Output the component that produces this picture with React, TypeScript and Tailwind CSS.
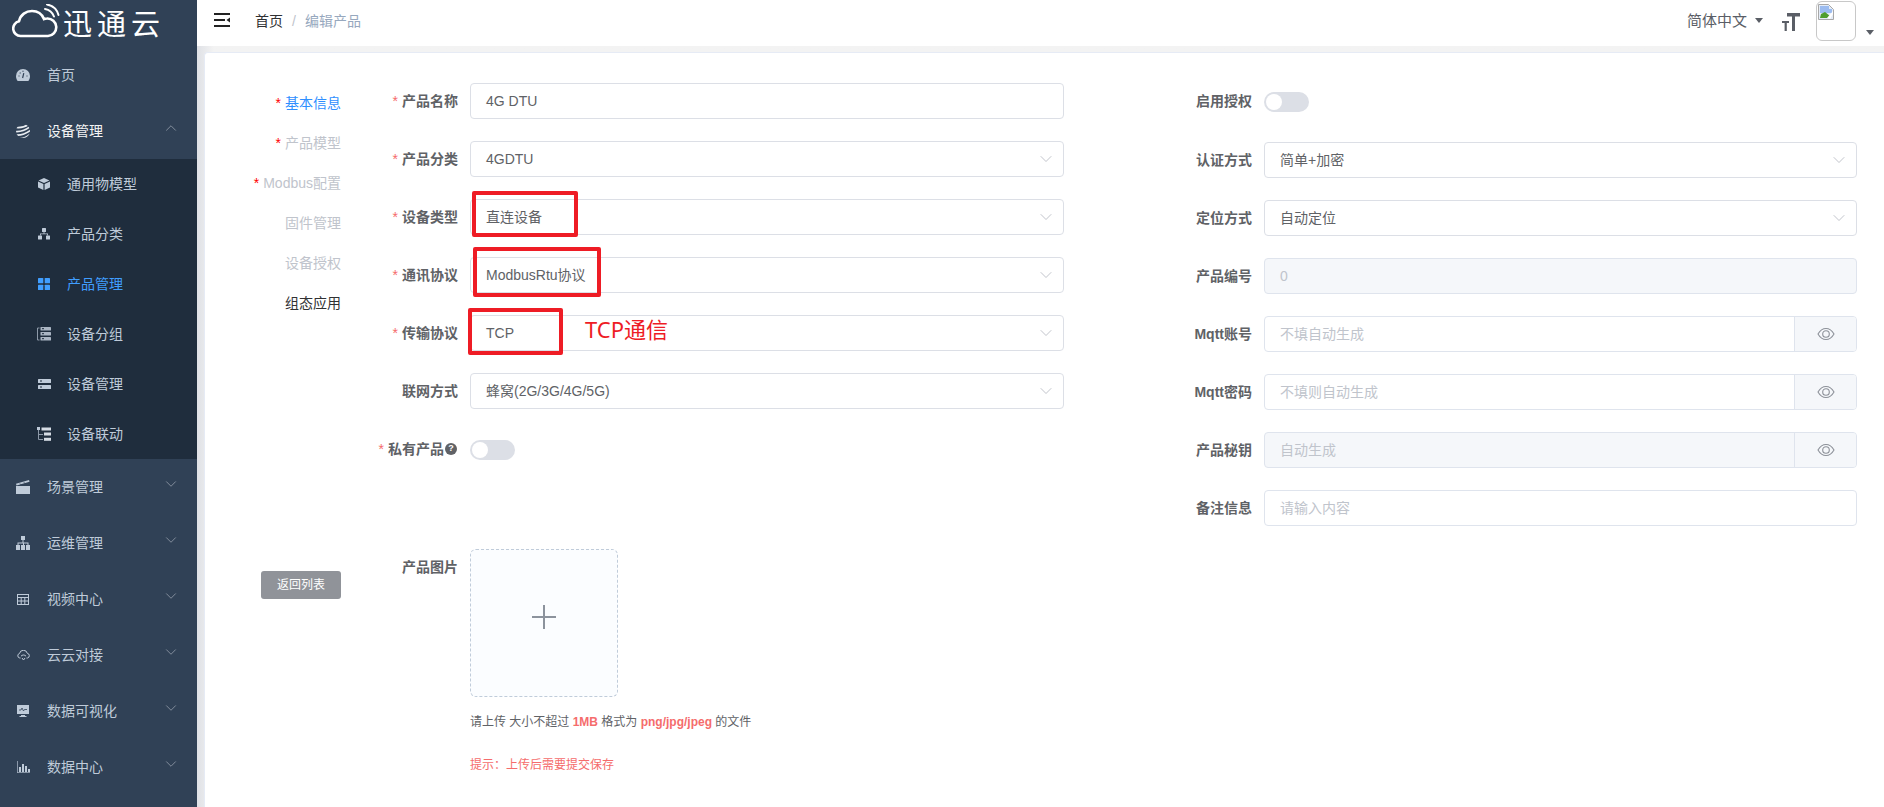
import React from "react";
import { ChevronDown, ChevronUp } from "lucide-react";

const Dash = () => (
  <svg width="14" height="12" viewBox="0 0 14 12" fill="currentColor">
    <path d="M7 0a7 7 0 0 1 7 7c0 2-.7 3.600-1.600 5H1.600C.7 10.600 0 9 0 7a7 7 0 0 1 7-7z" />
    <path d="M7.800 4.200 6.600 9M2.500 7h1M10.500 7h1M3.800 3.600l.7.700M7 1.800v1" stroke="#304156" strokeWidth="1.200" fill="none" />
  </svg>
);
const Globe = () => (
  <svg width="14" height="14" viewBox="0 0 14 14">
    <defs>
      <clipPath id="gc"><circle cx="7" cy="7" r="7" /></clipPath>
    </defs>
    <g clipPath="url(#gc)" stroke="#e8ecf1" strokeWidth="1.700" fill="none">
      <path d="M0 3.500C4 4 9 3 13 0M-1 7.500C4 8 10 6 15 2M0 11c5 .5 10-1.500 15-5M3 14.500c4 .5 8-1.500 11-4" />
    </g>
  </svg>
);
const Cube = () => (
  <svg width="12" height="12" viewBox="0 0 12 12" fill="#bfcbd9">
    <path d="M6 0l5.500 2.500L6 5 .5 2.500z" />
    <path d="M0 3.500l5.400 2.400V12L0 9.500zM12 3.500L6.600 5.900V12L12 9.500z" />
  </svg>
);
const Tree = () => (
  <svg width="12" height="12" viewBox="0 0 12 12" fill="#bfcbd9">
    <rect x="4" y="0" width="4" height="4" rx=".5" />
    <rect x="0" y="7.500" width="4" height="4" rx=".5" />
    <rect x="8" y="7.500" width="4" height="4" rx=".5" />
    <path d="M2 7.500V5.500h8v2h-.8V6.300H2.800v1.200zM5.600 4h.8v2h-.8z" />
  </svg>
);
const Grid4 = () => (
  <svg width="12" height="12" viewBox="0 0 12 12" fill="#409eff">
    <rect width="5.300" height="5.300" rx=".6" />
    <rect x="6.700" width="5.300" height="5.300" rx=".6" />
    <rect y="6.700" width="5.300" height="5.300" rx=".6" />
    <rect x="6.700" y="6.700" width="5.300" height="5.300" rx=".6" />
  </svg>
);
const Group = () => (
  <svg width="14" height="14" viewBox="0 0 14 14">
    <path d="M2.500 1H.5v12h2" stroke="#8d99a8" fill="none" />
    <rect x="3.500" y="0" width="10.500" height="3.500" rx=".6" fill="#aab5c3" />
    <rect x="3.500" y="5" width="10.500" height="3.500" rx=".6" fill="#aab5c3" />
    <rect x="3.500" y="10" width="10.500" height="3.500" rx=".6" fill="#aab5c3" />
    <path d="M5 1.700h2M5 6.700h2M5 11.700h2" stroke="#1f2d3d" />
  </svg>
);
const Server = () => (
  <svg width="13" height="10" viewBox="0 0 13 10" fill="#bfcbd9">
    <rect width="13" height="4" rx=".5" />
    <rect y="6" width="13" height="4" rx=".5" />
    <path d="M2 1.500h2v1H2zM2 7.500h2v1H2z" fill="#1f2d3d" />
  </svg>
);
const Flow = () => (
  <svg width="14" height="14" viewBox="0 0 14 14">
    <rect x="0" y="0" width="3" height="3" fill="#bfcbd9" />
    <path d="M1.500 3v9.500H6M1.500 7.500H6" stroke="#8d99a8" fill="none" />
    <rect x="4.500" y=".5" width="9.500" height="3" fill="#d5dce4" />
    <rect x="7" y="5.500" width="7" height="3" fill="#d5dce4" />
    <rect x="7" y="10.800" width="7" height="3" fill="#d5dce4" />
  </svg>
);
const Clap = () => (
  <svg width="14" height="14" viewBox="0 0 14 14" fill="#bfcbd9">
    <path d="M0 6h14v8H0z" />
    <path d="M0 3.800 13 0l.5 1.700-13 3.700z" />
    <path d="M4 3.600l1.200 1.200M8 2.400l1.200 1.200" stroke="#304156" />
  </svg>
);
const Org = () => (
  <svg width="14" height="14" viewBox="0 0 14 14" fill="#bfcbd9">
    <rect x="5" y="0" width="4" height="4" />
    <rect x="0" y="9" width="4" height="5" />
    <rect x="5" y="9" width="4" height="5" />
    <rect x="10" y="9" width="4" height="5" />
    <path d="M6.500 4h1v2.500h5V9h-1V7.500h-3.500V9h-1V7.500H2.500V9h-1V6.500h5z" />
  </svg>
);
const Table = () => (
  <svg width="12" height="11" viewBox="0 0 12 11" fill="none" stroke="#bfcbd9">
    <rect x=".5" y=".5" width="11" height="10" />
    <path d="M.5 3.500h11M.5 7h11M4.200 3.500v7M7.800 3.500v7" />
  </svg>
);
const CloudLink = () => (
  <svg width="13" height="11" viewBox="0 0 13 11" fill="none" stroke="#bfcbd9" strokeWidth="1">
    <path d="M3.500 8H2.800a2.300 2.300 0 0 1-.3-4.500 4 4 0 0 1 7.800-.2 2.400 2.400 0 0 1 .2 4.700H9.500" />
    <path d="M4 6.200a3.200 3.200 0 0 1 5 0M5 8l1.500 2L8 8" />
  </svg>
);
const Monitor = () => (
  <svg width="12" height="12" viewBox="0 0 12 12" fill="#bfcbd9">
    <path d="M0 0h12v9H0zM4 10h4v1h1.500v1h-7v-1H4z" />
    <path d="M2 5h2l1-2 1.500 3 1-1.500H10" stroke="#304156" strokeWidth=".8" fill="none" />
  </svg>
);
const Bars = () => (
  <svg width="13" height="12" viewBox="0 0 13 12" fill="#bfcbd9">
    <path d="M0 0h.8v11.200H13v.8H0z" opacity=".8" />
    <rect x="2" y="6" width="2" height="5" />
    <rect x="5" y="3" width="2" height="8" />
    <rect x="8" y="5" width="2" height="6" />
    <rect x="11" y="8" width="2" height="3" />
  </svg>
);

const Eye = () => (
  <svg width="18" height="16" viewBox="0 0 18 16" fill="none" stroke="#8d9199" strokeWidth="1.100">
    <path d="M1 8c2-3.500 4.800-5.500 8-5.500S15 4.500 17 8c-2 3.500-4.800 5.500-8 5.500S3 11.500 1 8z" />
    <circle cx="9" cy="8" r="3.300" />
  </svg>
);

const subMenu = [
  { icon: <Cube />, label: "通用物模型" },
  { icon: <Tree />, label: "产品分类" },
  { icon: <Grid4 />, label: "产品管理", active: true },
  { icon: <Group />, label: "设备分组" },
  { icon: <Server />, label: "设备管理" },
  { icon: <Flow />, label: "设备联动" },
];

const bottomMenu = [
  { icon: <Clap />, label: "场景管理" },
  { icon: <Org />, label: "运维管理" },
  { icon: <Table />, label: "视频中心" },
  { icon: <CloudLink />, label: "云云对接" },
  { icon: <Monitor />, label: "数据可视化" },
  { icon: <Bars />, label: "数据中心" },
];

const Sidebar = () => (
  <aside className="w-[197px] shrink-0 bg-[#304156] text-[14px] text-[#bfcbd9]">
    <div className="flex h-[47px] items-start pl-[12px] pt-[4px]">
      <svg width="48" height="34" viewBox="0 0 48 34" fill="none" stroke="#fff" strokeWidth="2.600" strokeLinecap="round">
        <path d="M11 32H8.500a7.500 7.500 0 0 1-1.500-14.800C8.500 10.500 14 7 20 7c5.500 0 10 3 12 8 1-.4 2-.5 3-.5a8.700 8.700 0 0 1 1 17.500z" />
        <path d="M33 5c4 .7 7.500 3.500 9 7.500M35 .5c5.500 1 10 5 11.500 10.500" strokeWidth="2" />
      </svg>
      <span className="ml-[3px] mt-[3px] text-[29px] leading-[36px] tracking-[5px] text-white">迅通云</span>
    </div>
    <div className="flex h-[56px] items-center">
      <span className="flex w-[47px] justify-center pr-[1px]"><Dash /></span>
      <span>首页</span>
    </div>
    <div className="relative flex h-[56px] items-center text-[#f4f4f5]">
      <span className="flex w-[47px] justify-center pr-[1px]"><Globe /></span>
      <span>设备管理</span>
      <ChevronUp size={18} strokeWidth={1.2} className="ml-auto mb-[6px] mr-[17px] text-[#8a94a3]" />
    </div>
    <div className="bg-[#1f2d3d]">
      {subMenu.map((item) => (
        <div key={item.label} className={`flex h-[50px] items-center ${item.active ? "text-[#409eff]" : ""}`}>
          <span className="ml-[37px] flex w-[14px] justify-center">{item.icon}</span>
          <span className="ml-[16px]">{item.label}</span>
        </div>
      ))}
    </div>
    {bottomMenu.map((item) => (
      <div key={item.label} className="flex h-[56px] items-center">
        <span className="flex w-[47px] justify-center pr-[1px]">{item.icon}</span>
        <span>{item.label}</span>
        <ChevronDown size={18} strokeWidth={1.2} className="ml-auto mb-[6px] mr-[17px] text-[#8a94a3]" />
      </div>
    ))}
  </aside>
);

const Navbar = () => (
  <header className="flex h-[46px] shrink-0 items-start bg-white">
    <svg className="ml-[17px] mt-[13px]" width="16" height="14" viewBox="0 0 16 14" fill="#222">
      <rect width="16" height="2" />
      <rect y="6" width="11" height="2" />
      <rect y="12" width="16" height="2" />
      <path d="M16 4.500v5L12.500 7z" />
    </svg>
    <div className="ml-[25px] mt-[11px] flex text-[14px] leading-[20px]">
      <span className="text-[#303133]">首页</span>
      <span className="mx-[9px] text-[#c0c4cc]">/</span>
      <span className="text-[#97a8be]">编辑产品</span>
    </div>
    <div className="ml-auto flex items-start pr-[10px]">
      <span className="mt-[11px] text-[15px] leading-[20px] text-[#5a5e66]">简体中文</span>
      <span className="ml-[8px] mt-[18px] h-0 w-0 border-x-[4.500px] border-t-[5px] border-x-transparent border-t-[#5a5e66]" />
      <svg className="ml-[19px] mt-[13px]" width="18" height="18" viewBox="0 0 18 18" fill="#5a5e66">
        <path d="M5 0h13v3.500h-5V18H10V3.500H5zM0 8h7v2H4.800v8H2.600v-8H0z" />
      </svg>
      <div className="ml-[16px] mt-[1px] h-[40px] w-[40px] rounded-[6px] border border-[#c8c8c8]">
        <svg className="ml-[1px] mt-[2px]" width="16" height="16" viewBox="0 0 16 16">
          <path d="M.5.500h10l5 5v10H.5z" fill="#e4ecf8" stroke="#a8a8a8" />
          <path d="M2 2h9v3h3v4H2z" fill="#9cbcf0" />
          <path d="M2 14l1-4 4-2 5 4-2 2z" fill="#4f9e2e" />
          <path d="M9 14l6-7v3l-3 5z" fill="#fff" />
        </svg>
      </div>
      <span className="ml-[10px] mt-[30px] h-0 w-0 border-x-[4px] border-t-[5px] border-x-transparent border-t-[#5a5e66]" />
    </div>
  </header>
);

const Stub = ({ children }: { children: string }) => (
  <span className="mr-[4px] font-normal text-[#f56c6c]">{children}</span>
);

const Label = ({ text, required }: { text: string; required?: boolean }) => (
  <div className="w-[117px] shrink-0 text-right text-[14px] font-bold leading-[36px] text-[#606266]">
    {required && <Stub>*</Stub>}
    {text}
  </div>
);

const Select = ({ value, wide }: { value: string; wide?: boolean }) => (
  <div className={`flex h-[36px] items-center rounded-[4px] border border-[#dcdfe6] bg-white pl-[15px] pr-[7px] text-[14px] text-[#606266] ${wide ? "w-[593px]" : "w-[594px]"}`}>
    <span>{value}</span>
    <ChevronDown size={20} strokeWidth={1} className="ml-auto text-[#b4b8c0]" />
  </div>
);

const Row = ({ text, required, children }: { text: string; required?: boolean; children: React.ReactNode }) => (
  <div className="mb-[22px] flex h-[36px] gap-[12px]">
    <Label text={text} required={required} />
    {children}
  </div>
);

const RightRow = ({ text, children }: { text: string; children: React.ReactNode }) => (
  <div className="mb-[22px] flex h-[36px] gap-[12px]">
    <div className="w-[100px] shrink-0 text-right text-[14px] font-bold leading-[36px] text-[#606266]">{text}</div>
    {children}
  </div>
);

const Switch = ({ top }: { top: string }) => (
  <div className={`h-[20px] w-[45px] rounded-full bg-[#dcdfe6] p-[2px] ${top}`}>
    <div className="h-[16px] w-[16px] rounded-full bg-white" />
  </div>
);

const Field = ({ placeholder, disabled }: { placeholder: string; disabled?: boolean }) => (
  <div className={`flex h-[36px] w-[593px] items-center rounded-[4px] border border-[#dfe4ed] pl-[15px] text-[14px] text-[#c0c4cc] ${disabled ? "bg-[#f5f7fa]" : "bg-white"}`}>
    {placeholder}
  </div>
);

const EyeField = ({ placeholder, disabled }: { placeholder: string; disabled?: boolean }) => (
  <div className={`flex h-[36px] w-[593px] overflow-hidden rounded-[4px] border border-[#dfe4ed] text-[14px] text-[#c0c4cc] ${disabled ? "bg-[#f5f7fa]" : "bg-white"}`}>
    <div className="flex flex-1 items-center pl-[15px]">{placeholder}</div>
    <div className="flex w-[62px] items-center justify-center border-l border-[#dfe4ed] bg-[#f5f7fa]">
      <Eye />
    </div>
  </div>
);

const tabs = [
  { label: "基本信息", star: true, color: "text-[#2f8fff]" },
  { label: "产品模型", star: true, color: "text-[#c0c4cc]" },
  { label: "Modbus配置", star: true, color: "text-[#c0c4cc]" },
  { label: "固件管理", color: "text-[#c0c4cc]" },
  { label: "设备授权", color: "text-[#c0c4cc]" },
  { label: "组态应用", color: "text-[#303133]" },
];

const App = () => {
  return (
    <div className="relative flex h-[807px] w-[1884px] overflow-hidden bg-white [font-family:'Liberation_Sans','Noto_Sans_CJK_SC',sans-serif]">
      <Sidebar />
      <div className="flex flex-1 flex-col">
        <Navbar />
        <div className="flex-1 bg-gradient-to-r from-[#dfe1e6] from-0% to-[#f3f3f3] to-[1%] pl-[7px] pt-[6px]">
          <div className="flex h-full rounded-tl-[4px] border-l border-t border-[#e6ebf5] bg-white">
            {/* left tabs */}
            <div className="w-[136px] shrink-0 pt-[30px] text-right text-[14px]">
              {tabs.map((t) => (
                <div key={t.label} className={`h-[40px] leading-[40px] ${t.color}`}>
                  {t.star && <span className="mr-[4px] text-[#f00]">*</span>}
                  {t.label}
                </div>
              ))}
              <button className="ml-[56px] mt-[248px] h-[28px] w-[80px] rounded-[3px] bg-[#909399] text-[12px] text-white">返回列表</button>
            </div>

            {/* left form column */}
            <div className="w-[723px] shrink-0 pt-[30px]">
              <Row text="产品名称" required>
                <div className="flex h-[36px] w-[594px] items-center rounded-[4px] border border-[#dcdfe6] pl-[15px] text-[14px] text-[#606266]">4G DTU</div>
              </Row>
              <Row text="产品分类" required><Select value="4GDTU" /></Row>
              <Row text="设备类型" required><Select value="直连设备" /></Row>
              <Row text="通讯协议" required><Select value="ModbusRtu协议" /></Row>
              <Row text="传输协议" required><Select value="TCP" /></Row>
              <Row text="联网方式"><Select value="蜂窝(2G/3G/4G/5G)" /></Row>
              <div className="flex h-[36px] gap-[13px]">
                <div className="flex w-[116px] shrink-0 items-center justify-end text-[14px] font-bold text-[#606266]">
                  <Stub>*</Stub>
                  私有产品
                  <span className="ml-[1px] flex h-[12px] w-[12px] items-center justify-center rounded-full bg-[#606266] text-[9px] text-white">?</span>
                </div>
                <Switch top="mt-[9px]" />
              </div>
              <div className="mt-[82px] flex gap-[12px]">
                <div className="w-[117px] shrink-0 text-right text-[14px] font-bold leading-[36px] text-[#606266]">产品图片</div>
                <div>
                  <div className="flex h-[148px] w-[148px] items-center justify-center rounded-[6px] border border-dashed border-[#c0ccda] bg-[#fbfdff] pb-[12px]">
                    <svg width="24" height="24" viewBox="0 0 24 24" stroke="#8c939d" strokeWidth="2">
                      <path d="M12 0v24M0 12h24" />
                    </svg>
                  </div>
                  <p className="mt-[17px] text-[12px] leading-[17px] text-[#606266]">
                    请上传 大小不超过 <b className="text-[#f56c6c]">1MB</b> 格式为 <b className="text-[#f56c6c]">png/jpg/jpeg</b> 的文件
                  </p>
                  <p className="mt-[26px] text-[12px] leading-[17px] text-[#f56c6c]">提示：上传后需要提交保存</p>
                </div>
              </div>
            </div>

            {/* right form column */}
            <div className="ml-[88px] pt-[30px]">
              <RightRow text="启用授权"><Switch top="mt-[9px]" /></RightRow>
              <div className="h-[1px]" />
              <RightRow text="认证方式"><Select value="简单+加密" wide /></RightRow>
              <RightRow text="定位方式"><Select value="自动定位" wide /></RightRow>
              <RightRow text="产品编号"><Field placeholder="0" disabled /></RightRow>
              <RightRow text="Mqtt账号"><EyeField placeholder="不填自动生成" /></RightRow>
              <RightRow text="Mqtt密码"><EyeField placeholder="不填则自动生成" /></RightRow>
              <RightRow text="产品秘钥"><EyeField placeholder="自动生成" disabled /></RightRow>
              <RightRow text="备注信息"><Field placeholder="请输入内容" /></RightRow>
            </div>
          </div>
        </div>
      </div>

      {/* red annotations drawn over the form */}
      <div className="absolute left-[472px] top-[191px] h-[46px] w-[106px] rounded-[2px] border-[4px] border-[#ee1c25]" />
      <div className="absolute left-[473px] top-[247px] h-[50px] w-[128px] rounded-[2px] border-[4px] border-[#ee1c25]" />
      <div className="absolute left-[468px] top-[308px] h-[47px] w-[95px] rounded-[2px] border-[4px] border-[#ee1c25]" />
      <div className="absolute left-[585px] top-[314px] text-[22px] leading-[30px] text-[#ee1c25] [font-family:'Noto_Sans','Noto_Sans_CJK_SC',sans-serif]">TCP通信</div>
    </div>
  );
};

export default App;
